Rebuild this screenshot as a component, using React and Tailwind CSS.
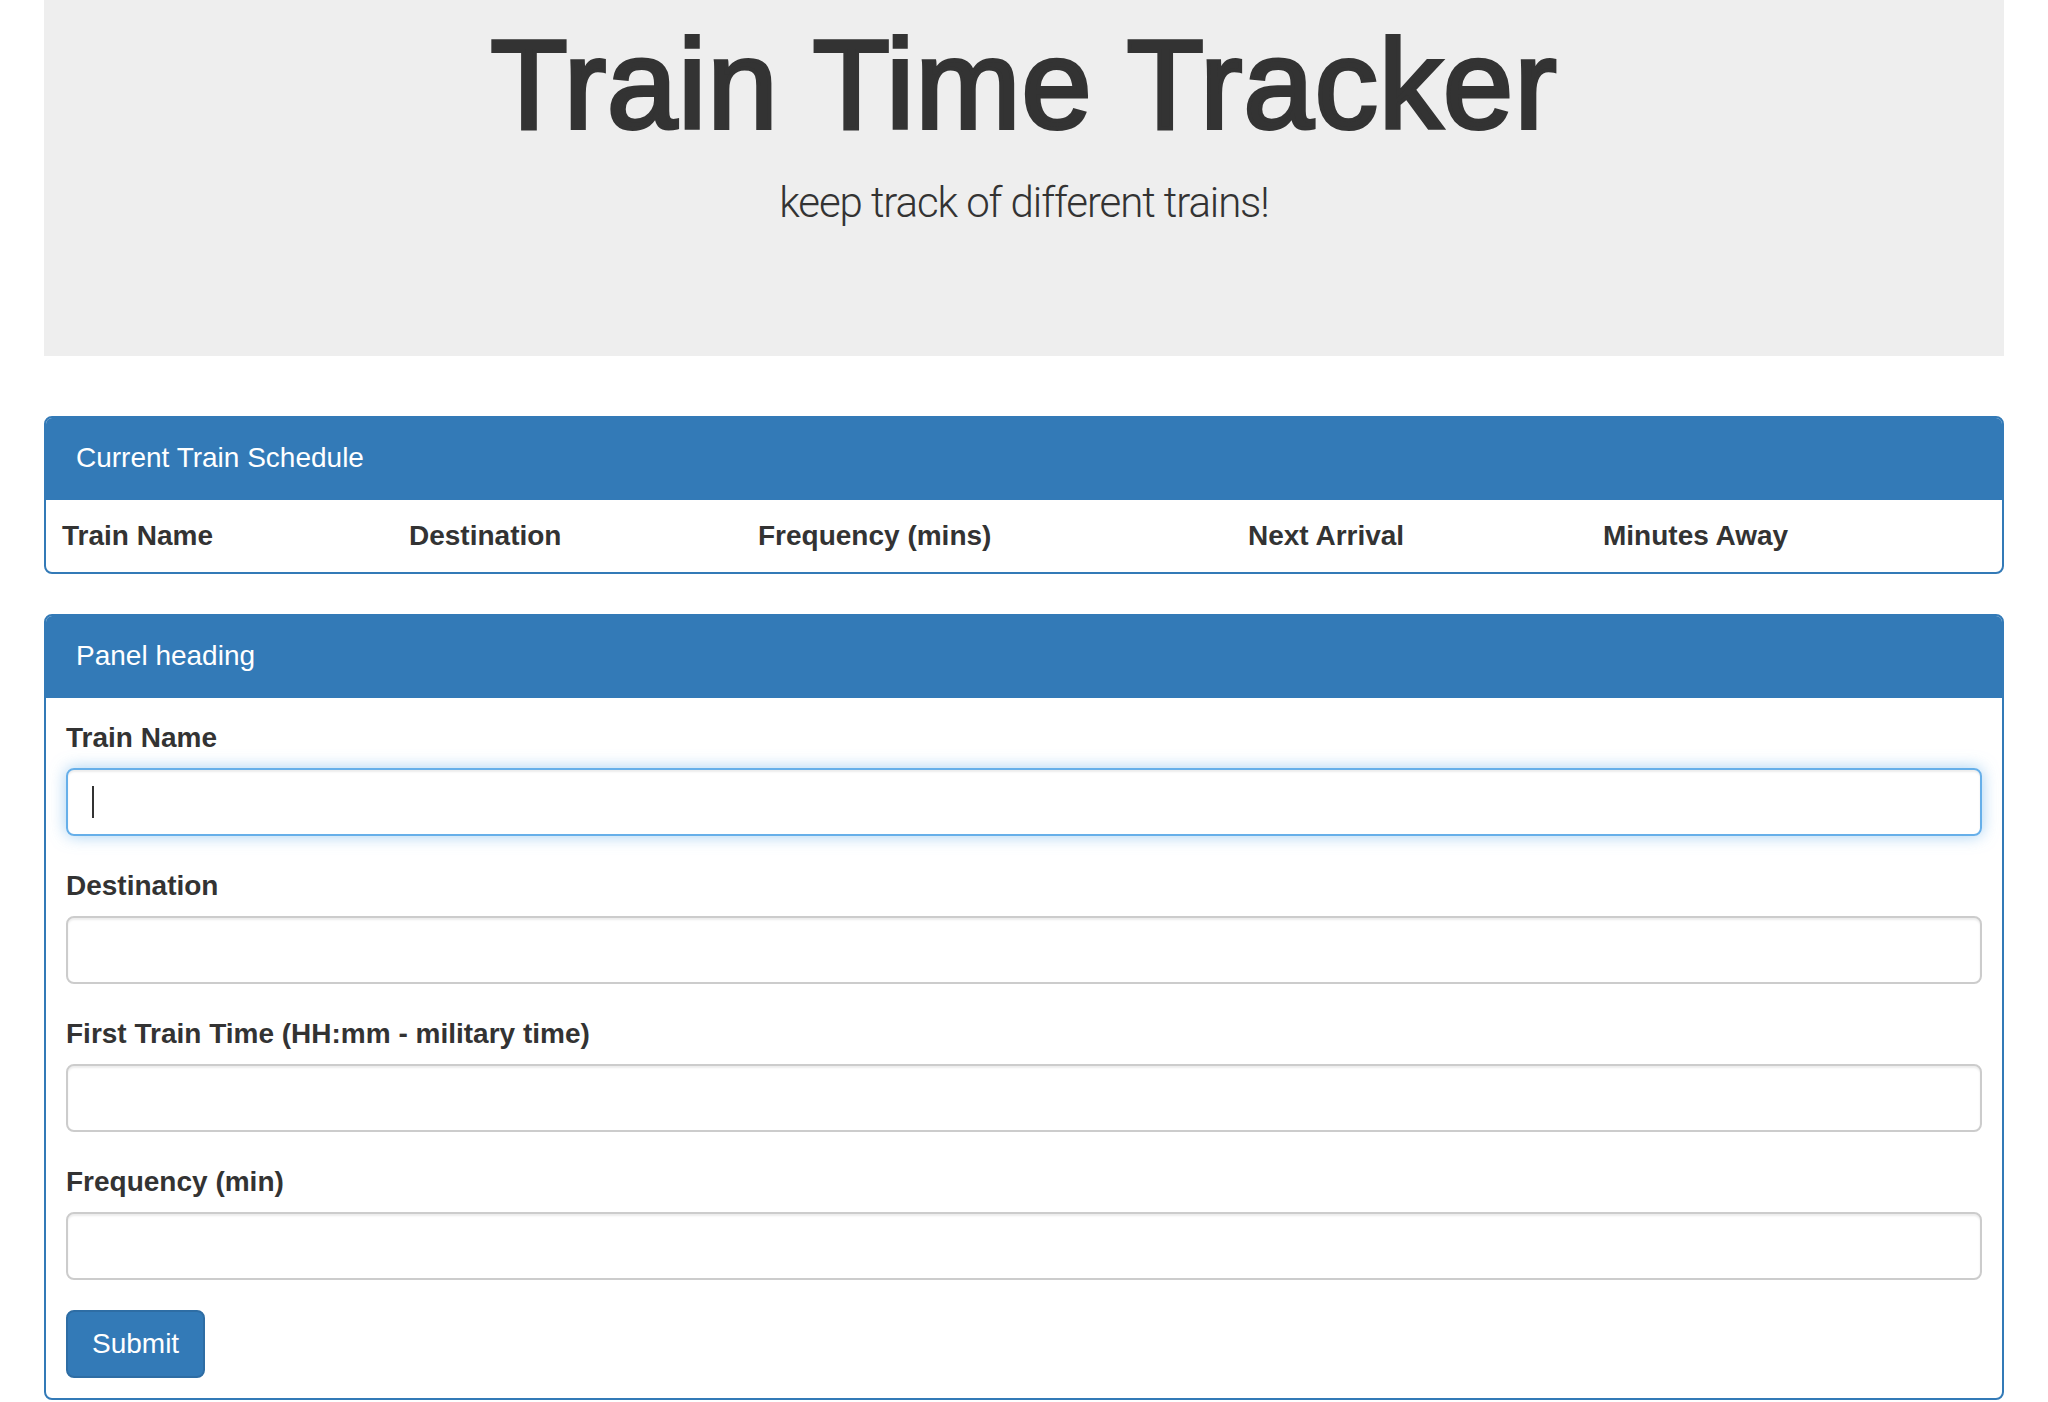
import { useState } from 'react';

const columns = [
   { label: 'Train Name', width: 'w-[347px]' },
   { label: 'Destination', width: 'w-[349px]' },
   { label: 'Frequency (mins)', width: 'w-[490px]' },
   { label: 'Next Arrival', width: 'w-[355px]' },
   { label: 'Minutes Away', width: '' },
];

const fields = [
   { id: 'trainName', label: 'Train Name' },
   { id: 'destination', label: 'Destination' },
   { id: 'firstTime', label: 'First Train Time (HH:mm - military time)' },
   { id: 'frequency', label: 'Frequency (min)' },
];

function App() {
   const [values, setValues] = useState({ trainName: '', destination: '', firstTime: '', frequency: '' });

   const handleChange = (id, value) => {
      setValues({ ...values, [id]: value });
   };

   return (
      <div className="min-h-screen bg-white font-['Liberation_Sans',Arial,sans-serif] text-[#333] text-[28px] leading-[40px]">
         <div className="mx-[44px]">
            <div className="bg-[#eeeeee] pt-[15px] pb-[93px] mb-[60px] text-center">
               <h1 className="text-[126px] leading-[139px] mb-[19px] font-normal tracking-[1.2px] [-webkit-text-stroke:4px_#333]">Train Time Tracker</h1>
               <p className="font-['Roboto',sans-serif] font-light text-[42px] leading-[60px] mb-[30px] tracking-[-1.1px]">keep track of different trains!</p>
            </div>

            <div className="rounded-[8px] border-2 border-[#337ab7] mb-[40px] overflow-hidden">
               <div className="bg-[#337ab7] text-white px-[30px] pt-[20px] pb-[22px]">Current Train Schedule</div>
               <table className="w-full table-fixed">
                  <thead>
                     <tr>
                        {columns.map(col => (
                           <th key={col.label} className={`text-left font-bold p-[16px] ${col.width}`}>{col.label}</th>
                        ))}
                     </tr>
                  </thead>
                  <tbody></tbody>
               </table>
            </div>

            <div className="rounded-[8px] border-2 border-[#337ab7] overflow-hidden">
               <div className="bg-[#337ab7] text-white px-[30px] pt-[20px] pb-[22px]">Panel heading</div>
               <div className="p-[20px]">
                  {fields.map((field, i) => (
                     <div key={field.id} className="mb-[30px]">
                        <label htmlFor={field.id} className="block font-bold mb-[10px]">{field.label}</label>
                        <div className="relative">
                           <input
                              id={field.id}
                              type="text"
                              value={values[field.id]}
                              onChange={(e) => handleChange(field.id, e.target.value)}
                              className={i === 0
                                 ? 'block w-full h-[68px] px-[24px] rounded-[8px] border-2 border-[#66afe9] outline-none shadow-[inset_0_2px_2px_rgba(0,0,0,0.075),0_0_16px_rgba(102,175,233,0.6)]'
                                 : 'block w-full h-[68px] px-[24px] rounded-[8px] border-2 border-[#cccccc] outline-none shadow-[inset_0_2px_2px_rgba(0,0,0,0.075)]'}
                           />
                           {i === 0 && !values.trainName && (
                              <span className="absolute left-[26px] top-[18px] w-[2px] h-[32px] bg-[#333]"></span>
                           )}
                        </div>
                     </div>
                  ))}
                  <button className="h-[68px] px-[24px] bg-[#337ab7] border-2 border-[#2e6da4] rounded-[8px] text-white">
                     Submit
                  </button>
               </div>
            </div>
         </div>
      </div>
   );
}

export default App;
